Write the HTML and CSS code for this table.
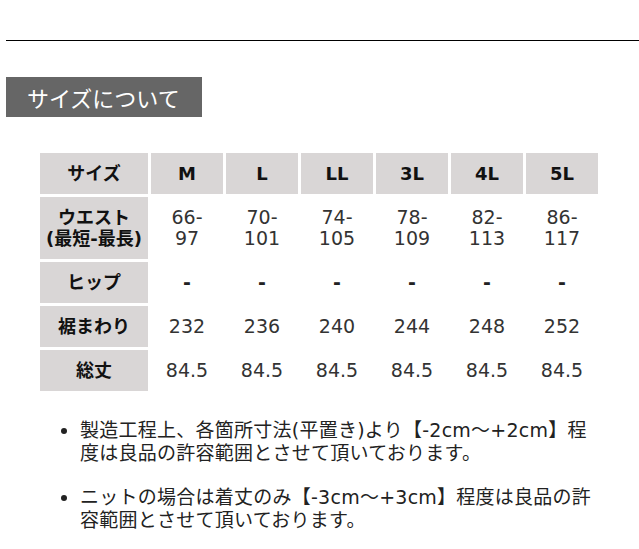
FILE: index.html
```html
<!DOCTYPE html>
<html lang="ja">
<head>
<meta charset="utf-8">
<link rel="stylesheet" href="styles.css">
</head>
<body>
<div class="page">
  <hr class="rule">
  <h2 class="title">サイズについて</h2>
  <div class="content">
    <table class="size-table">
      <tr>
        <th>サイズ</th><th>M</th><th>L</th><th>LL</th><th>3L</th><th>4L</th><th>5L</th>
      </tr>
      <tr>
        <th>ウエスト<br>(最短-最長)</th>
        <td>66-<br>97</td><td>70-<br>101</td><td>74-<br>105</td><td>78-<br>109</td><td>82-<br>113</td><td>86-<br>117</td>
      </tr>
      <tr>
        <th>ヒップ</th>
        <td class="dash">-</td><td class="dash">-</td><td class="dash">-</td><td class="dash">-</td><td class="dash">-</td><td class="dash">-</td>
      </tr>
      <tr>
        <th>裾まわり</th>
        <td>232</td><td>236</td><td>240</td><td>244</td><td>248</td><td>252</td>
      </tr>
      <tr>
        <th>総丈</th>
        <td>84.5</td><td>84.5</td><td>84.5</td><td>84.5</td><td>84.5</td><td>84.5</td>
      </tr>
    </table>
    <ul class="notes">
      <li>製造工程上、各箇所寸法(平置き)より【-2cm～+2cm】程度は良品の許容範囲とさせて頂いております。</li>
      <li>ニットの場合は着丈のみ【-3cm～+3cm】程度は良品の許容範囲とさせて頂いております。</li>
    </ul>
  </div>
</div>
</body>
</html>
```

FILE: styles.css
```css
html, body {
  margin: 0;
  padding: 0;
  background: #fff;
}
body {
  font-family: "DejaVu Sans", "Noto Sans CJK JP", sans-serif;
  color: #222;
}
.page {
  padding: 40px 0 0 6px;
}
.rule {
  margin: 0;
  border: 0;
  border-top: 1px solid #000;
  height: 0;
}
.title {
  display: inline-block;
  margin: 36px 0 0 0;
  width: 196px;
  height: 40px;
  box-sizing: border-box;
  padding-left: 21px;
  background: #666;
  color: #fff;
  font-family: "Noto Sans CJK JP", sans-serif;
  font-weight: normal;
  font-size: 22px;
  line-height: 40px;
}
.content {
  padding-left: 31px;
  width: 564px;
}
.size-table {
  margin-top: 33px;
  border-collapse: separate;
  border-spacing: 3px;
  table-layout: fixed;
}
.size-table th,
.size-table td {
  padding: 10px 0;
  text-align: center;
  vertical-align: middle;
  font-size: 18px;
  line-height: 21px;
  width: 72px;
}
.size-table th {
  background: #d9d6d6;
  font-weight: bold;
  color: #111;
}
.size-table tr > th:first-child {
  width: 108px;
}
.size-table td {
  background: #fff;
  font-weight: normal;
  font-size: 19px;
  color: #333;
}
.size-table td.dash {
  font-weight: bold;
  color: #222;
}
.notes {
  margin: 25px 0 0 0;
  padding-left: 43px;
  font-family: "DejaVu Sans", "Noto Sans CJK JP", sans-serif;
  font-size: 19px;
  letter-spacing: 0.25px;
  line-height: 23px;
  color: #222;
}
.notes li {
  margin-bottom: 21px;
}
```
